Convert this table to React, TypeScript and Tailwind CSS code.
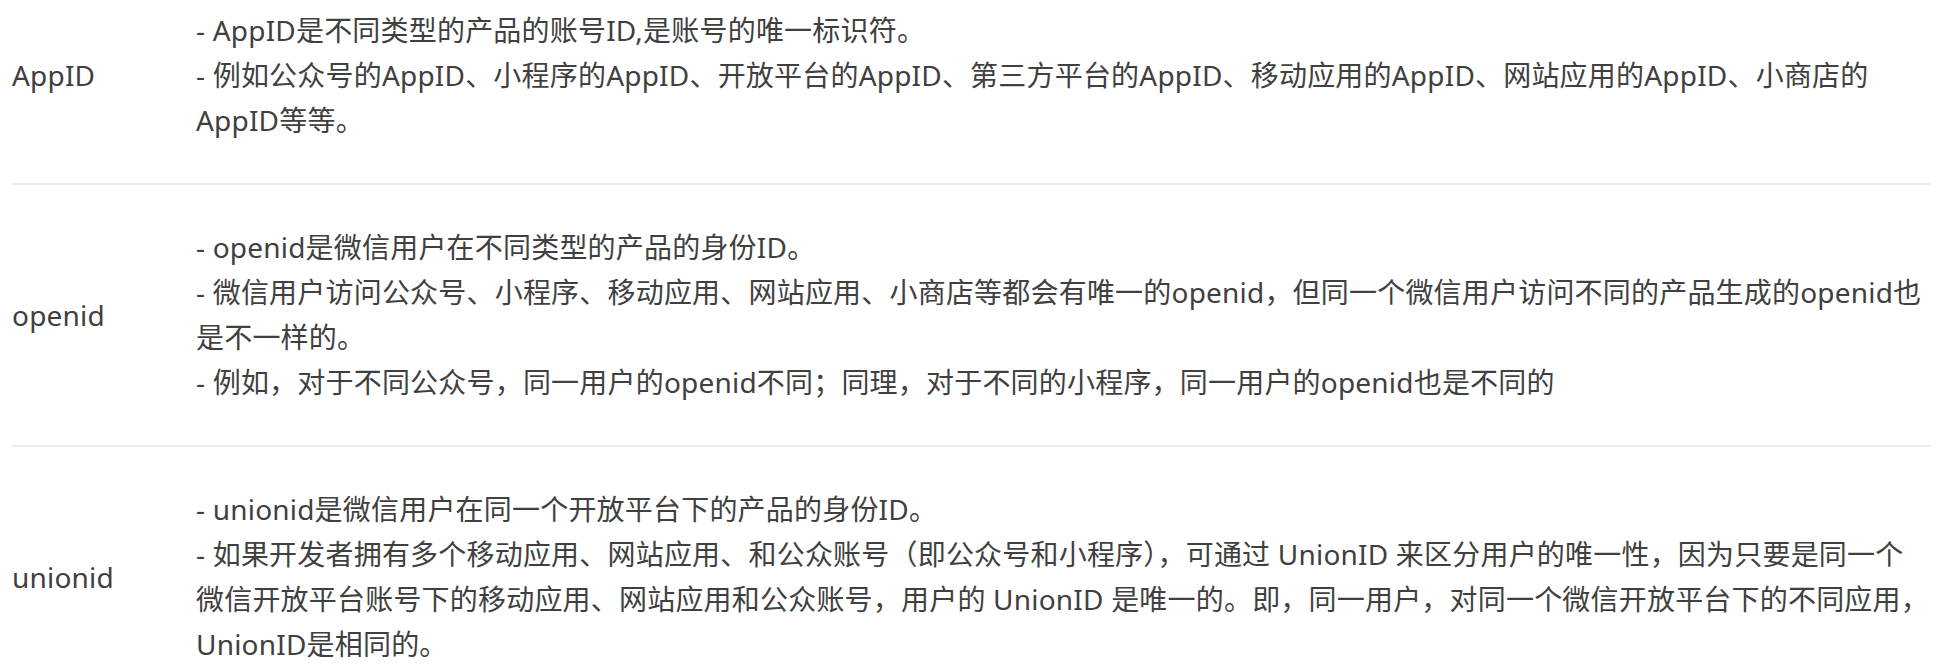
const rows: { label: string; lines: string[] }[] = [
  {
    label: 'AppID',
    lines: [
      '- AppID是不同类型的产品的账号ID,是账号的唯一标识符。',
      '- 例如公众号的AppID、小程序的AppID、开放平台的AppID、第三方平台的AppID、移动应用的AppID、网站应用的AppID、小商店的',
      'AppID等等。',
    ],
  },
  {
    label: 'openid',
    lines: [
      '- openid是微信用户在不同类型的产品的身份ID。',
      '- 微信用户访问公众号、小程序、移动应用、网站应用、小商店等都会有唯一的openid，但同一个微信用户访问不同的产品生成的openid也',
      '是不一样的。',
      '- 例如，对于不同公众号，同一用户的openid不同；同理，对于不同的小程序，同一用户的openid也是不同的',
    ],
  },
  {
    label: 'unionid',
    lines: [
      '- unionid是微信用户在同一个开放平台下的产品的身份ID。',
      '- 如果开发者拥有多个移动应用、网站应用、和公众账号（即公众号和小程序），可通过 UnionID 来区分用户的唯一性，因为只要是同一个',
      '微信开放平台账号下的移动应用、网站应用和公众账号，用户的 UnionID 是唯一的。即，同一用户，对同一个微信开放平台下的不同应用，',
      'UnionID是相同的。',
    ],
  },
]

export default function App() {
  return (
    <div
      className="h-[666px] w-[1960px] overflow-hidden bg-white text-[28px] leading-[45px] tracking-[0.2px] text-[#404040]"
      style={{ fontFamily: '"Noto Sans", "Noto Sans CJK SC", sans-serif' }}
    >
      <div className="ml-[12px] w-[1919px]">
        {rows.map((r, i) => (
          <div
            key={r.label}
            className={`flex items-center border-[#ebebeb] ${i === 0 ? 'pt-[8px] pb-10' : 'py-10'} ${
              i < rows.length - 1 ? 'border-b-2' : ''
            }`}
          >
            <div className="w-[184px] shrink-0">{r.label}</div>
            <div className="flex-1">
              {r.lines.map((l) => (
                <div key={l} className="whitespace-nowrap">
                  {l}
                </div>
              ))}
            </div>
          </div>
        ))}
      </div>
    </div>
  )
}
